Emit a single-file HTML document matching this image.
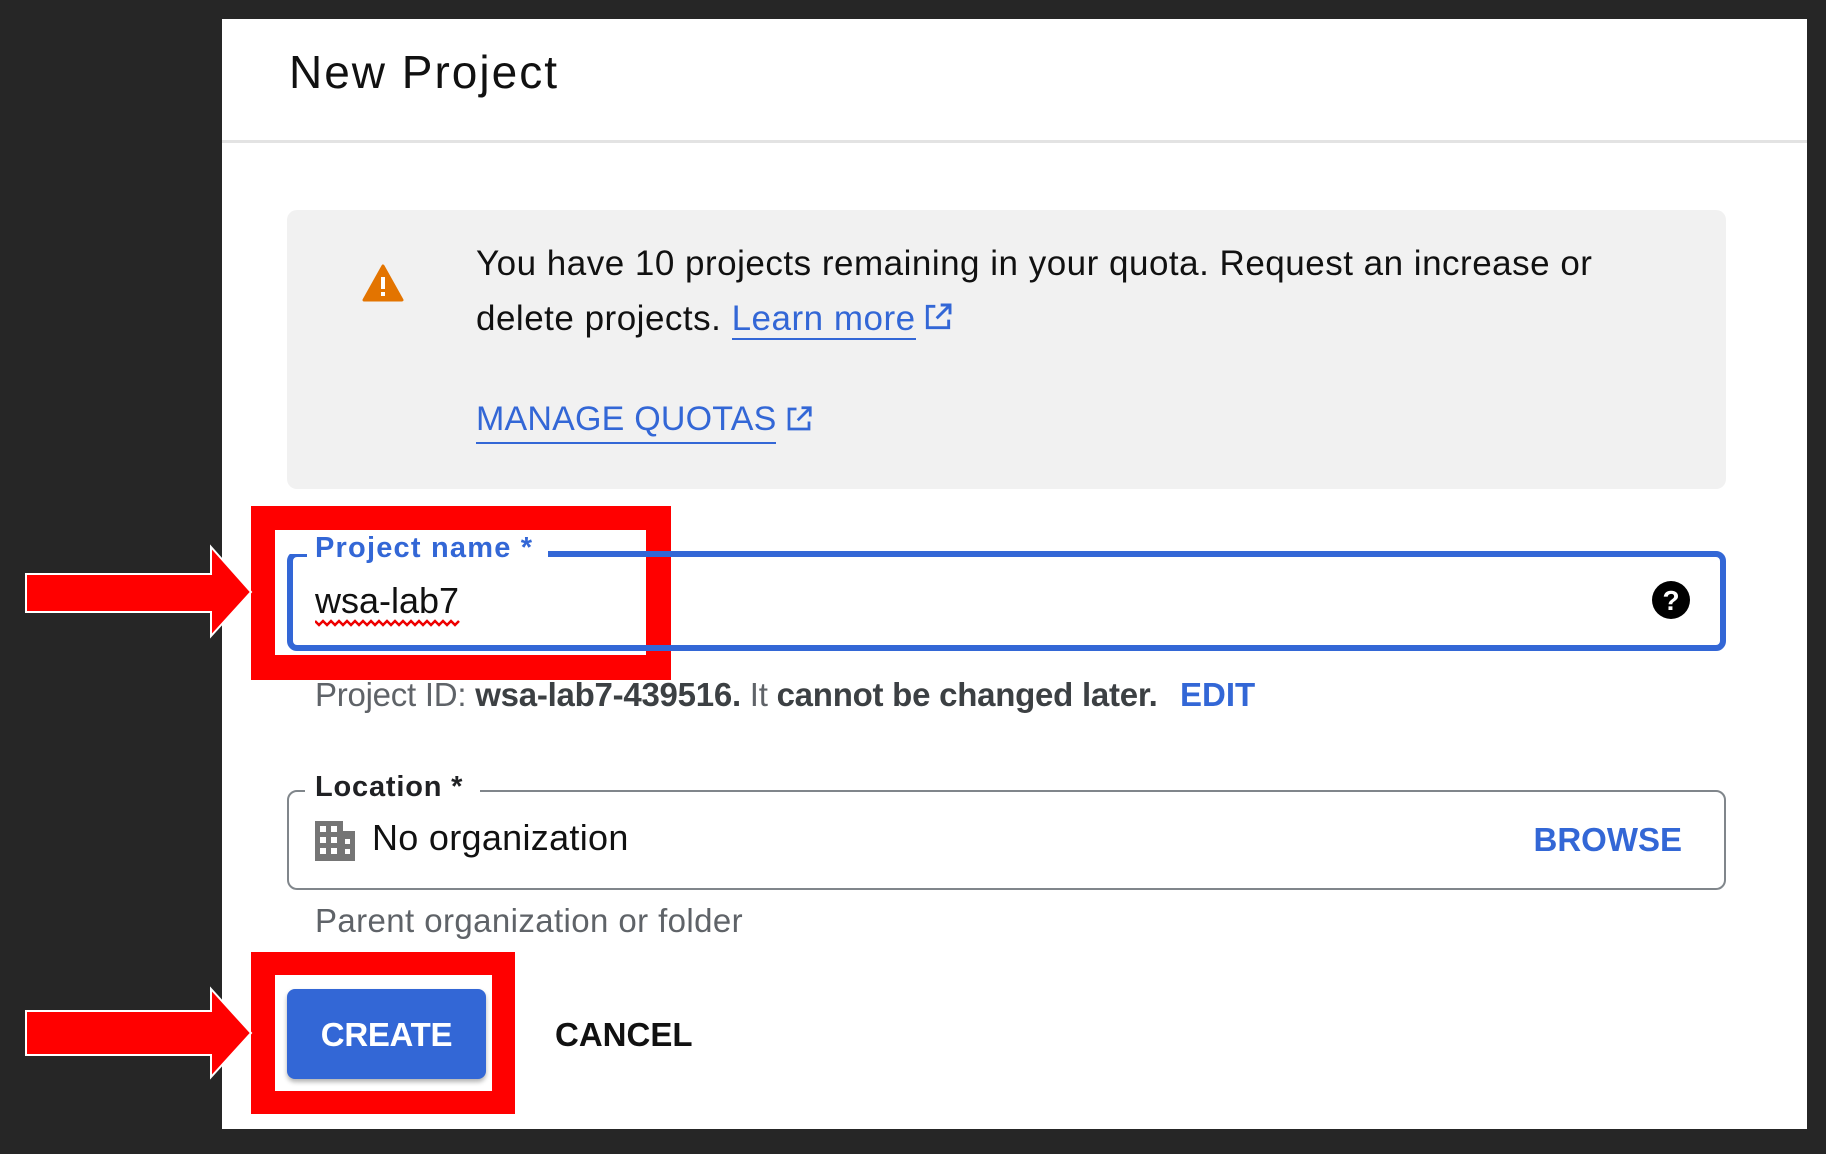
<!DOCTYPE html>
<html><head><meta charset="utf-8"><style>
*{margin:0;padding:0;box-sizing:border-box}
body{width:1826px;height:1154px;background:#262626;position:relative;overflow:hidden;font-family:"Liberation Sans",Arial,sans-serif}
.a{position:absolute;white-space:nowrap;line-height:1}
</style></head><body>
<div class="a" style="left:222px;top:19px;width:1585px;height:1110px;background:#fff"></div>
<div class="a" style="left:222px;top:140px;width:1585px;height:3px;background:#e3e3e3"></div>
<div class="a" style="left:289px;top:49px;font-size:46px;color:#111;letter-spacing:2px">New Project</div>

<div class="a" style="left:287px;top:210px;width:1439px;height:279px;background:#f1f1f1;border-radius:10px"></div>
<svg class="a" style="left:362px;top:264px" width="42" height="38" viewBox="0 0 42 38"><path d="M21 2 L40 36 L2 36 Z" fill="#e37400" stroke="#e37400" stroke-width="3" stroke-linejoin="round"/><rect x="19" y="13" width="4" height="12" fill="#fff"/><rect x="19" y="28" width="4" height="4" fill="#fff"/></svg>
<div class="a" style="left:476px;top:246px;font-size:35px;color:#111;letter-spacing:0.5px">You have 10 projects remaining in your quota. Request an increase or</div>
<div class="a" style="left:476px;top:301px;font-size:35px;color:#111;letter-spacing:0.5px">delete projects. <span style="color:#3367d6;border-bottom:2px solid #3367d6">Learn more</span><svg style="vertical-align:-3px;margin-left:6px" width="32" height="32" viewBox="0 0 24 24"><path d="M10 4H4v16h16v-6M14 3h7v7M21 3L11 13" fill="none" stroke="#3367d6" stroke-width="2.2"/></svg></div>
<div class="a" style="left:476px;top:402px;font-size:34px;color:#3367d6;letter-spacing:0.2px;border-bottom:2px solid #3367d6;padding-bottom:6px">MANAGE QUOTAS</div>
<svg class="a" style="left:784px;top:404px" width="30" height="30" viewBox="0 0 24 24"><path d="M10 4H4v16h16v-6M14 3h7v7M21 3L11 13" fill="none" stroke="#3367d6" stroke-width="2.2"/></svg>

<div class="a" style="left:251px;top:506px;width:420px;height:174px;background:#f00"></div>
<div class="a" style="left:275px;top:530px;width:371px;height:125px;background:#fff"></div>
<div class="a" style="left:287px;top:551px;width:1439px;height:100px;border:6px solid #3367d6;border-radius:10px"></div>
<div class="a" style="left:307px;top:540px;width:241px;height:24px;background:#fff"></div>
<div class="a" style="left:275px;top:540px;width:32px;height:14px;background:#fff"></div>
<div class="a" style="left:315px;top:534px;font-size:29px;color:#3367d6;font-weight:bold;letter-spacing:1.2px">Project name *</div>
<div class="a" style="left:315px;top:583px;font-size:36px;color:#111;letter-spacing:0px">wsa-lab7</div>
<svg class="a" style="left:315px;top:618px" width="146" height="10" viewBox="0 0 146 10"><path d="M0 3 l4 4 l4 -4 l4 4 l4 -4 l4 4 l4 -4 l4 4 l4 -4 l4 4 l4 -4 l4 4 l4 -4 l4 4 l4 -4 l4 4 l4 -4 l4 4 l4 -4 l4 4 l4 -4 l4 4 l4 -4 l4 4 l4 -4 l4 4 l4 -4 l4 4 l4 -4 l4 4 l4 -4 l4 4 l4 -4 l4 4 l4 -4 l4 4 l4 -4" fill="none" stroke="#e00" stroke-width="2.5"/></svg>
<svg class="a" style="left:1651px;top:580px" width="40" height="40" viewBox="0 0 40 40"><circle cx="20" cy="20" r="19" fill="#000"/><text x="20" y="30" text-anchor="middle" font-family="Liberation Sans" font-weight="bold" font-size="28" fill="#fff">?</text></svg>

<div class="a" style="left:315px;top:678px;font-size:33px;color:#5f6368;letter-spacing:-0.25px">Project ID: <b style="color:#3c4043">wsa-lab7-439516.</b> It <b style="color:#3c4043">cannot be changed later.</b></div>
<div class="a" style="left:1180px;top:678px;font-size:33px;color:#3367d6;font-weight:bold">EDIT</div>

<div class="a" style="left:287px;top:790px;width:1439px;height:100px;border:2px solid #80868b;border-radius:10px"></div>
<div class="a" style="left:305px;top:780px;width:175px;height:20px;background:#fff"></div>
<div class="a" style="left:315px;top:773px;font-size:29px;color:#202124;font-weight:bold;letter-spacing:0.8px">Location *</div>
<svg class="a" style="left:315px;top:821px" width="40" height="40" viewBox="0 0 40 40"><rect x="0" y="0" width="28" height="40" fill="#757575"/><rect x="26" y="10" width="14" height="30" fill="#757575"/><g fill="#fff"><rect x="5" y="5" width="6" height="6"/><rect x="16" y="5" width="6" height="6"/><rect x="5" y="16" width="6" height="6"/><rect x="16" y="16" width="6" height="6"/><rect x="5" y="27" width="6" height="6"/><rect x="16" y="27" width="6" height="6"/><rect x="30" y="18" width="5" height="5"/><rect x="30" y="28" width="5" height="5"/></g></svg>
<div class="a" style="left:372px;top:820px;font-size:36px;color:#111;letter-spacing:0.3px">No organization</div>
<div class="a" style="right:144px;top:823px;font-size:33px;color:#3367d6;font-weight:bold">BROWSE</div>
<div class="a" style="left:315px;top:904px;font-size:33px;color:#5f6368;letter-spacing:0.4px">Parent organization or folder</div>

<div class="a" style="left:251px;top:952px;width:264px;height:162px;background:#f00"></div>
<div class="a" style="left:275px;top:975px;width:217px;height:116px;background:#fff"></div>
<div class="a" style="left:287px;top:989px;width:199px;height:90px;background:#3367d6;border-radius:8px;box-shadow:0 3px 5px rgba(0,0,0,.3)"></div>
<div class="a" style="left:287px;top:1018px;width:199px;text-align:center;font-size:33px;color:#fff;font-weight:bold;letter-spacing:-0.3px">CREATE</div>
<div class="a" style="left:555px;top:1018px;font-size:33px;color:#111;font-weight:bold;letter-spacing:0px">CANCEL</div>

<svg class="a" style="left:0;top:0" width="260" height="1154" viewBox="0 0 260 1154">
<path d="M26 574 H211 V547 L251 592 L211 636 V612 H26 Z" fill="#f00" stroke="#fff" stroke-width="2"/>
<path d="M26 1011 H211 V989 L251 1033 L211 1077 V1055 H26 Z" fill="#f00" stroke="#fff" stroke-width="2"/>
</svg>
</body></html>
